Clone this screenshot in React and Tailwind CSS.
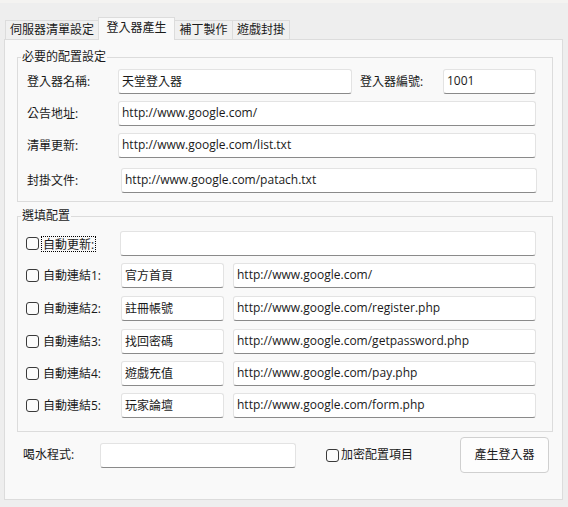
import React from "react";

const FONT = "font-['Open_Sans','Noto_Sans_CJK_TC',sans-serif]";

function Field({ value = "", className = "" }) {
  return (
    <input
      readOnly
      defaultValue={value}
      className={`h-[25px] bg-white border border-[#e3e3e3] border-b-[#8a8a8a] rounded-[3px] px-[3px] pb-[2px] text-[12px] text-[#1a1a1a] outline-none ${FONT} ${className}`}
    />
  );
}

function Check() {
  return <div className="w-[13px] h-[13px] shrink-0 rounded-[3px] border border-[#3a3a3a] bg-[#fbfbfb]" />;
}

function Tab({ label, active, className = "" }) {
  return active ? (
    <div
      className={`h-[23px] flex items-start justify-center pt-[2px] bg-[#f9f9f9] border border-b-0 border-[#dcdcdc] text-[12px] leading-[16px] text-[#1a1a1a] whitespace-nowrap ${className}`}
    >
      {label}
    </div>
  ) : (
    <div
      className={`h-[20px] flex items-center justify-center bg-[#f0f0f0] border border-[#dcdcdc] text-[12px] leading-[16px] text-[#1a1a1a] whitespace-nowrap ${className}`}
    >
      {label}
    </div>
  );
}

function Group({ title, className = "", children }) {
  return (
    <fieldset className={`border border-[#dcdcdc] p-0 m-0 min-w-0 ${className}`}>
      <legend className="ml-[3px] px-[1px] text-[12px] leading-[16px] text-[#1a1a1a]">{title}</legend>
      {children}
    </fieldset>
  );
}

const links = [
  ["自動連結1:", "官方首頁", "http://www.google.com/"],
  ["自動連結2:", "註冊帳號", "http://www.google.com/register.php"],
  ["自動連結3:", "找回密碼", "http://www.google.com/getpassword.php"],
  ["自動連結4:", "遊戲充值", "http://www.google.com/pay.php"],
  ["自動連結5:", "玩家論壇", "http://www.google.com/form.php"],
];
const linkGaps = ["mt-[7px]", "mt-[8px]", "mt-[8px]", "mt-[7px]", "mt-[7px]"];

export default function App() {
  return (
    <div className={`w-[568px] h-[507px] bg-[#eeeeee] flex flex-col ${FONT} text-[12px] text-[#1a1a1a]`}>
      <div className="h-[3px] bg-[#f4f3f1]" />
      {/* tab strip */}
      <div className="mt-[14px] -mb-px relative z-10 flex items-end pl-[5px]">
        <Tab label="伺服器清單設定" className="w-[94px]" />
        <Tab label="登入器產生" active className="w-[77px] -ml-px" />
        <Tab label="補丁製作" className="w-[59px] -ml-px" />
        <Tab label="遊戲封掛" className="w-[58px] -ml-px" />
      </div>

      {/* tab page */}
      <div className="ml-[4px] w-[559px] h-[461px] bg-[#f9f9f9] border border-[#dcdcdc] flex flex-col px-[12px]">
        <Group title="必要的配置設定" className="mt-[9px] w-[536px]">
          <div className="flex flex-col pl-[9px] pt-[4px] pb-[8px]">
            <div className="flex items-center">
              <span className="w-[91px]">登入器名稱:</span>
              <Field value="天堂登入器" className="w-[234px]" />
              <span className="w-[91px] pl-[8px]">登入器編號:</span>
              <Field value="1001" className="w-[93px]" />
            </div>
            <div className="flex items-center mt-[7px]">
              <span className="w-[91px]">公告地址:</span>
              <Field value="http://www.google.com/" className="w-[418px]" />
            </div>
            <div className="flex items-center mt-[7px]">
              <span className="w-[91px]">清單更新:</span>
              <Field value="http://www.google.com/list.txt" className="w-[418px]" />
            </div>
            <div className="flex items-center mt-[10px]">
              <span className="w-[94px]">封掛文件:</span>
              <Field value="http://www.google.com/patach.txt" className="w-[416px]" />
            </div>
          </div>
        </Group>

        <Group title="選填配置" className="mt-[6px] w-[536px]">
          <div className="flex flex-col pl-[8px] pt-[7px] pb-[13px]">
            <div className="flex items-center">
              <Check />
              <div className="w-[81px] shrink-0 flex">
                <span className="ml-[2px] h-[16px] leading-[15px] border border-dotted border-[#000] px-[1px] whitespace-nowrap">
                  自動更新:
                </span>
              </div>
              <Field className="w-[416px]" />
            </div>
            {links.map(([label, name, url], i) => (
              <div key={label} className={`flex items-center ${linkGaps[i]}`}>
                <Check />
                <span className="ml-[4px] w-[78px] whitespace-nowrap">{label}</span>
                <Field value={name} className="w-[103px]" />
                <Field value={url} className="ml-[9px] w-[303px]" />
              </div>
            ))}
          </div>
        </Group>

        <div className="mt-[5px] flex items-center pl-[6px]">
          <span className="w-[77px]">喝水程式:</span>
          <Field className="w-[196px]" />
          <div className="ml-[30px] flex items-center">
            <Check />
            <span className="ml-[2px]">加密配置項目</span>
          </div>
          <button className={`ml-auto mr-[1px] w-[89px] h-[36px] rounded-[4px] border border-[#d0d0d0] bg-[#fdfdfd] text-[12px] text-[#1a1a1a] ${FONT}`}>
            產生登入器
          </button>
        </div>
      </div>
    </div>
  );
}
